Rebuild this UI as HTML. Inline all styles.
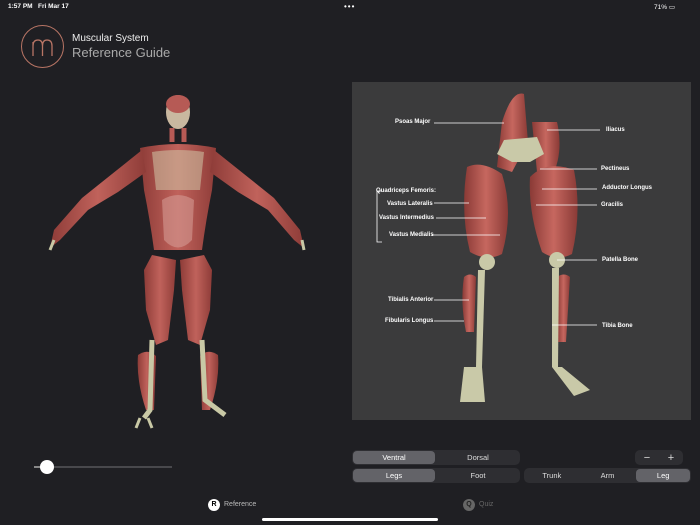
<!DOCTYPE html>
<html><head><meta charset="utf-8"><style>
*{margin:0;padding:0;box-sizing:border-box}
body{width:700px;height:525px;background:#1f1f23;font-family:"Liberation Sans",sans-serif;color:#fff;position:relative;overflow:hidden}
.abs{position:absolute}
.seg{position:absolute;background:#2e2e32;border-radius:5px;display:flex;font-size:7.5px;color:#ddd;height:15px}
.seg div{flex:1;display:flex;align-items:center;justify-content:center;border-radius:4px;margin:1px}
.seg .on{background:#636368;color:#fff}
.lbl{position:absolute;font-size:6px;font-weight:bold;color:#fff;white-space:nowrap}
</style></head><body>
<div class="abs" style="left:8px;top:3px;font-size:6.5px;font-weight:bold">1:57 PM&nbsp;&nbsp; Fri Mar 17</div>
<div class="abs" style="left:344px;top:2px;font-size:8px;letter-spacing:1px">•••</div>
<div class="abs" style="left:654px;top:3px;font-size:6.5px">71% ▭</div>
<div class="abs" style="left:21px;top:25px;width:43px;height:43px;border:1.3px solid #b87565;border-radius:50%"></div>
<svg class="abs" style="left:21px;top:25px" width="43" height="43"><path d="M12 31 V17 M12 21 Q12 15 17 15 Q21.5 15 21.5 21 V31 M21.5 21 Q21.5 15 26 15 Q31 15 31 21 V31" stroke="#b87565" stroke-width="1.3" fill="none"/></svg>
<div class="abs" style="left:72px;top:33px;font-size:10px;color:#eee">Muscular System</div>
<div class="abs" style="left:72px;top:45px;font-size:13px;color:#aaa">Reference Guide</div>

<svg class="abs" style="left:40px;top:90px" width="270" height="340">
<defs><linearGradient id="m" x1="0" x2="1"><stop offset="0" stop-color="#8e3c38"/><stop offset=".5" stop-color="#c0625b"/><stop offset="1" stop-color="#8e3c38"/></linearGradient></defs>
<g fill="url(#m)">
<path d="M100 58 Q138 50 176 58 L172 100 Q166 130 162 160 L114 160 Q110 130 104 100Z"/>
<path d="M102 60 L72 84 L42 108 L14 140 L10 158 L20 150 L48 120 L78 102 L106 82Z"/>
<path d="M174 60 L204 84 L234 108 L260 140 L264 158 L254 150 L228 120 L198 102 L170 82Z"/>
<path d="M112 165 L136 170 L134 200 L128 250 L116 255 L106 220 L104 180Z"/>
<path d="M164 165 L140 170 L142 200 L148 250 L160 255 L170 220 L172 180Z"/>
<path d="M98 265 Q108 258 116 266 L114 320 L106 320 Q96 290 98 265Z"/>
<path d="M178 265 Q168 258 160 266 L162 320 L170 320 Q180 290 178 265Z"/>
</g>
<path d="M112 62 Q138 58 164 62 L160 100 L116 100Z" fill="#cfc7a8" opacity=".55"/>
<path d="M122 110 Q138 100 154 110 L152 150 Q138 165 124 150Z" fill="#d49a92" opacity=".6"/>
<ellipse cx="138" cy="22" rx="12" ry="17" fill="#c9b8a0"/>
<ellipse cx="138" cy="14" rx="12" ry="9" fill="#b65a55"/>
<path d="M132 38 L132 52 M144 38 L144 52" stroke="#b65a55" stroke-width="5"/>
<path d="M112 250 L110 320 L104 328" stroke="#c8c8a5" stroke-width="5" fill="none"/>
<path d="M162 250 L165 310 L185 325" stroke="#c8c8a5" stroke-width="5" fill="none"/>
<path d="M100 328 L96 338 M108 328 L112 338 M14 150 L10 160 M262 150 L264 160" stroke="#c8c8a5" stroke-width="3"/>
</svg>

<div class="abs" style="left:352px;top:82px;width:339px;height:338px;background:#3b3b3c"></div>
<svg class="abs" style="left:352px;top:82px" width="339" height="338">
<defs><linearGradient id="g" x1="0" x2="1"><stop offset="0" stop-color="#8a3a36"/><stop offset=".5" stop-color="#c6675f"/><stop offset="1" stop-color="#8a3a36"/></linearGradient></defs>
<g fill="url(#g)">
<path d="M150 40 Q160 8 172 12 L176 60 L160 90 L145 85Z"/>
<path d="M180 40 L205 40 Q212 70 200 95 L185 90Z"/>
<path d="M115 85 Q130 78 150 92 Q162 130 150 172 Q135 180 118 170 Q108 130 115 85Z"/>
<path d="M178 95 Q195 78 222 88 Q230 130 220 172 Q205 180 190 170 Q176 130 178 95Z"/>
<path d="M112 195 Q118 190 124 195 L122 250 L114 250 Q108 220 112 195Z"/>
<path d="M205 195 Q212 190 218 195 L214 260 L206 260Z"/>
</g>
<g fill="#c9c9a8">
<path d="M152 58 L185 55 L192 72 L178 80 L160 80 L145 72Z"/>
<circle cx="135" cy="180" r="8"/><circle cx="205" cy="178" r="8"/>
<path d="M126 188 L133 188 L130 285 L124 285Z"/>
<path d="M200 186 L207 186 L206 285 L200 285Z"/>
<path d="M112 285 L130 285 L133 320 L108 320Z"/>
<path d="M200 285 L210 285 L238 308 L222 314Z"/>
</g>
<g stroke="#fff" stroke-width=".8">
<line x1="82" y1="41" x2="152" y2="41"/><line x1="195" y1="48" x2="248" y2="48"/>
<line x1="188" y1="87" x2="245" y2="87"/><line x1="190" y1="107" x2="245" y2="107"/>
<line x1="184" y1="123" x2="245" y2="123"/><line x1="82" y1="121" x2="117" y2="121"/>
<line x1="84" y1="136" x2="134" y2="136"/><line x1="80" y1="153" x2="148" y2="153"/>
<line x1="205" y1="178" x2="245" y2="178"/><line x1="82" y1="218" x2="117" y2="218"/>
<line x1="82" y1="239" x2="112" y2="239"/><line x1="200" y1="243" x2="245" y2="243"/>
<path d="M30 109 H25 V160 H30" fill="none"/>
</g>
</svg>
<div class="lbl" style="left:395px;top:119px">Psoas Major</div>
<div class="lbl" style="left:606px;top:127px">Iliacus</div>
<div class="lbl" style="left:601px;top:166px">Pectineus</div>
<div class="lbl" style="left:602px;top:185px">Adductor Longus</div>
<div class="lbl" style="left:601px;top:202px">Gracilis</div>
<div class="lbl" style="left:376px;top:188px">Quadriceps Femoris:</div>
<div class="lbl" style="left:387px;top:201px">Vastus Lateralis</div>
<div class="lbl" style="left:379px;top:215px">Vastus Intermedius</div>
<div class="lbl" style="left:389px;top:232px">Vastus Medialis</div>
<div class="lbl" style="left:602px;top:257px">Patella Bone</div>
<div class="lbl" style="left:388px;top:297px">Tibialis Anterior</div>
<div class="lbl" style="left:385px;top:318px">Fibularis Longus</div>
<div class="lbl" style="left:602px;top:323px">Tibia Bone</div>

<div class="abs" style="left:34px;top:466px;width:138px;height:2px;background:#48484c"></div>
<div class="abs" style="left:34px;top:466px;width:13px;height:2px;background:#888"></div>
<div class="abs" style="left:40px;top:460px;width:14px;height:14px;border-radius:50%;background:#fff"></div>

<div class="seg" style="left:352px;top:450px;width:168px"><div class="on">Ventral</div><div>Dorsal</div></div>
<div class="seg" style="left:352px;top:468px;width:168px"><div class="on">Legs</div><div>Foot</div></div>
<div class="seg" style="left:524px;top:468px;width:167px"><div>Trunk</div><div>Arm</div><div class="on">Leg</div></div>
<div class="seg" style="left:635px;top:450px;width:48px;font-size:11px"><div>−</div><div>+</div></div>

<div class="abs" style="left:208px;top:499px;width:12px;height:12px;border-radius:50%;background:#fff;color:#000;font-size:7px;font-weight:bold;text-align:center;line-height:12px">R</div>
<div class="abs" style="left:224px;top:501px;font-size:7px;color:#bbb">Reference</div>
<div class="abs" style="left:463px;top:499px;width:12px;height:12px;border-radius:50%;background:#666;color:#222;font-size:7px;font-weight:bold;text-align:center;line-height:12px">Q</div>
<div class="abs" style="left:479px;top:501px;font-size:7px;color:#666">Quiz</div>
<div class="abs" style="left:262px;top:518px;width:176px;height:3px;border-radius:2px;background:#fff"></div>
</body></html>
